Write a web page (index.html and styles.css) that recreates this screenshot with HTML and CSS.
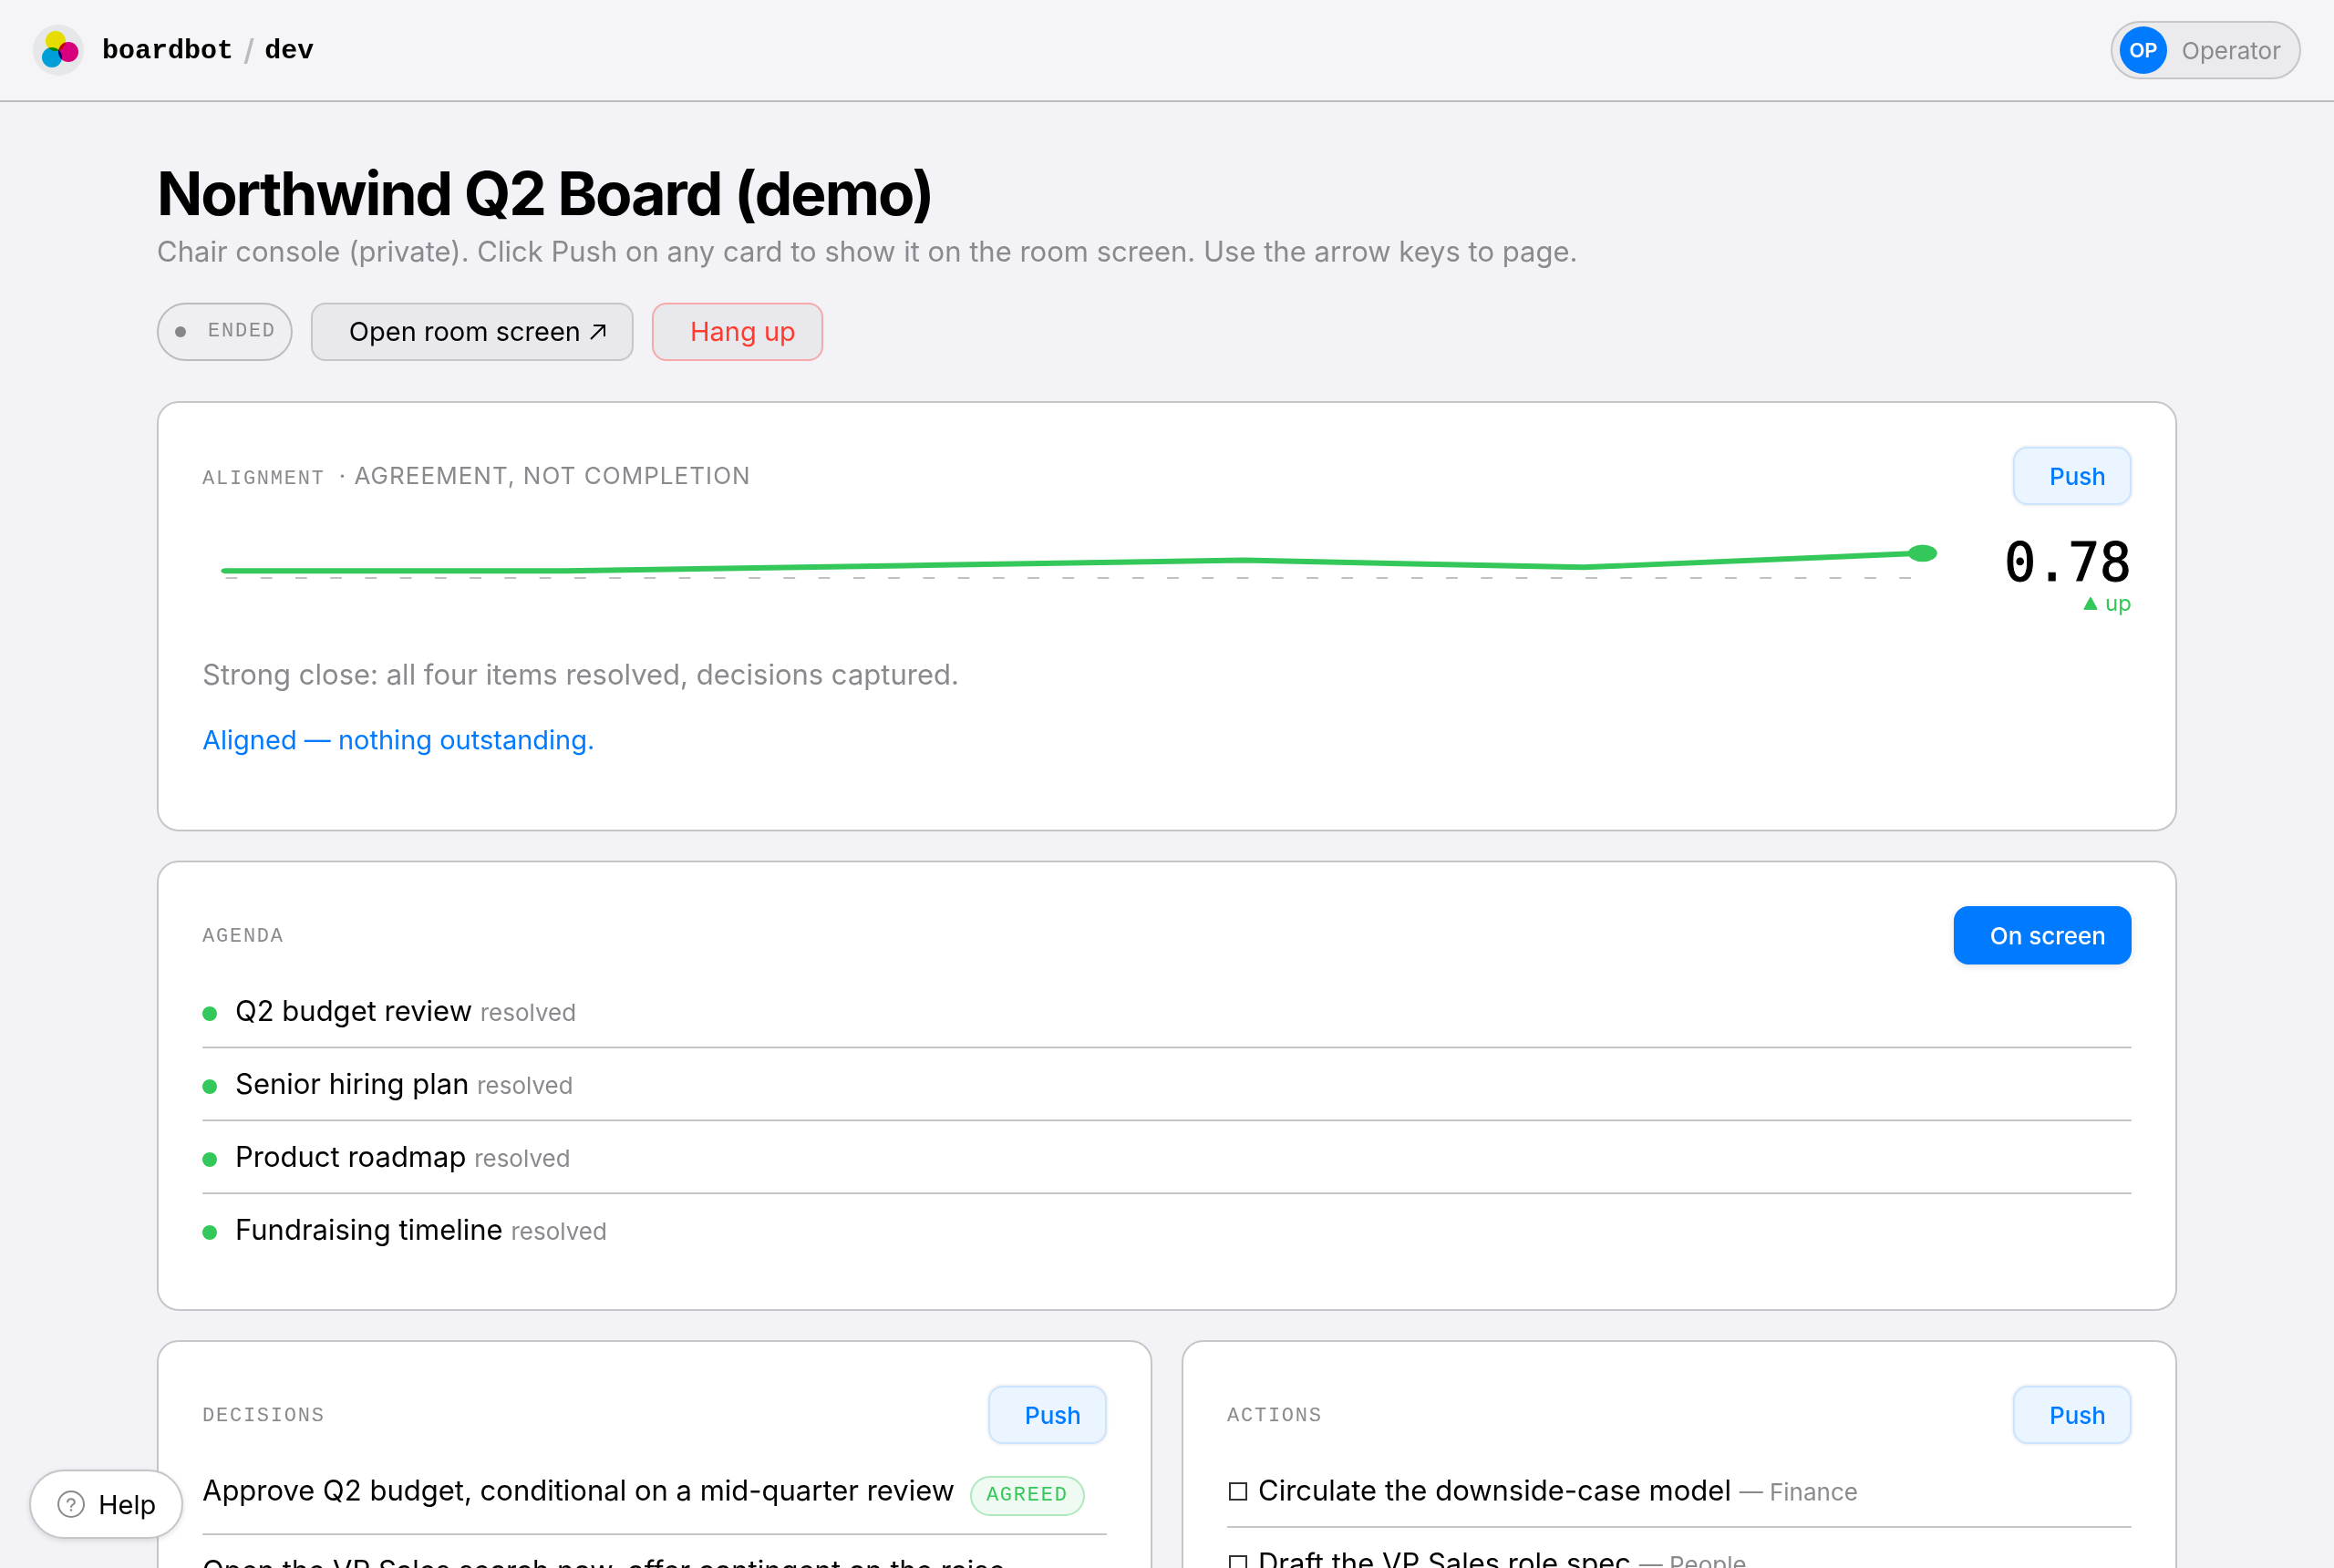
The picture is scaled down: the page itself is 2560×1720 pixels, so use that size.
FILE: index.html
```html
<!DOCTYPE html>
<html lang="en">
<head>
<meta charset="utf-8">
<meta name="viewport" content="width=device-width, initial-scale=1">
<title>Northwind Q2 Board (demo) · boardbot</title>
<link rel="stylesheet" href="styles.css">
</head>
<body>
<div class="page">
  <header class="topbar">
    <div class="brand">
      <svg class="logo" viewBox="0 0 56 56" aria-hidden="true">
        <circle cx="28" cy="28" r="28" fill="#e5e7e8"/>
        <g class="inks">
          <circle cx="25" cy="18" r="11" fill="#e6dc00"/>
          <circle cx="39" cy="30" r="11" fill="#d9007e"/>
          <circle cx="21" cy="36" r="11" fill="#009fda"/>
        </g>
      </svg>
      <span class="brand-name">boardbot</span>
      <span class="slash">/</span>
      <span class="brand-name">dev</span>
    </div>
    <button class="user" type="button"><span class="avatar">OP</span>Operator</button>
  </header>

  <main class="content">
    <h1>Northwind Q2 Board (demo)</h1>
    <p class="lead">Chair console (private). Click Push on any card to show it on the room screen. Use the arrow keys to page.</p>
    <div class="toolbar">
      <span class="status">Ended</span>
      <a class="btn" href="#room">Open room screen
        <svg class="arrow" viewBox="0 0 18 18" aria-hidden="true"><path d="M1 17 16 2M4 2h12v12"/></svg>
      </a>
      <button class="btn danger" type="button">Hang up</button>
    </div>

    <section class="card">
      <div class="card-head">
        <h2>Alignment <span class="note">· agreement, not completion</span></h2>
        <button class="push" type="button">Push</button>
      </div>
      <div class="trend">
        <svg class="chart" viewBox="0 0 300 30" preserveAspectRatio="none" role="img" aria-label="Alignment over time">
          <path d="M4 15H296" stroke="#c0c0c2" stroke-width=".5" stroke-dasharray="2 4"/>
          <path d="M4 12.920 62.400 12.920 120.800 11.360 179.200 9.800 237.600 11.880 296 7.720" stroke="#34c759" stroke-width="1.600" stroke-linecap="round" stroke-linejoin="round"/>
          <circle cx="296" cy="7.720" r="2.500" fill="#34c759"/>
        </svg>
        <div class="score">
          <div class="value">0.78</div>
          <div class="delta"><svg viewBox="0 0 16 16" aria-hidden="true"><path d="M8 2 14.500 14H1.500Z"/></svg>up</div>
        </div>
      </div>
      <p class="summary">Strong close: all four items resolved, decisions captured.</p>
      <p class="outcome">Aligned — nothing outstanding.</p>
    </section>

    <section class="card">
      <div class="card-head">
        <h2>Agenda</h2>
        <button class="push active" type="button">On screen</button>
      </div>
      <ul class="rows">
        <li><i class="dot"></i>Q2 budget review <small>resolved</small></li>
        <li><i class="dot"></i>Senior hiring plan <small>resolved</small></li>
        <li><i class="dot"></i>Product roadmap <small>resolved</small></li>
        <li><i class="dot"></i>Fundraising timeline <small>resolved</small></li>
      </ul>
    </section>

    <div class="pair">
      <section class="card">
        <div class="card-head">
          <h2>Decisions</h2>
          <button class="push" type="button">Push</button>
        </div>
        <ul class="rows">
          <li>Approve Q2 budget, conditional on a mid-quarter review <span class="chip">Agreed</span></li>
          <li>Open the VP Sales search now, offer contingent on the raise</li>
        </ul>
      </section>
      <section class="card">
        <div class="card-head">
          <h2>Actions</h2>
          <button class="push" type="button">Push</button>
        </div>
        <ul class="rows">
          <li><input type="checkbox" id="a1"><label for="a1">Circulate the downside-case model <small>— Finance</small></label></li>
          <li><input type="checkbox" id="a2"><label for="a2">Draft the VP Sales role spec <small>— People</small></label></li>
        </ul>
      </section>
    </div>
  </main>

  <button class="help" type="button">
    <svg viewBox="0 0 32 32" aria-hidden="true"><circle cx="16" cy="16" r="14"/><path d="M12 13.500a4 4 0 0 1 7.900.6c0 2.600-3.900 2.600-3.900 4.800"/><circle class="point" cx="16" cy="22.500" r="1.300"/></svg>
    Help
  </button>
</div>
</body>
</html>
```

FILE: styles.css
```css
:root {
  --bg: #f2f2f7;
  --line: #c6c6c8;
  --muted: #8a8a8e;
  --blue: #007aff;
  --green: #34c759;
  --red: #ff3b30;
  --sans: Inter, "Liberation Sans", sans-serif;
  --mono: "Liberation Mono", "DejaVu Sans Mono", monospace;
}

* { box-sizing: border-box; }

body {
  margin: 0;
  background: var(--bg);
  color: #000;
  font: 31px/48px var(--sans);
}

h1, h2, p, ul { margin: 0; padding: 0; }
ul { list-style: none; }
button { font-family: inherit; cursor: pointer; }

.page {
  height: 100vh;
  overflow-y: auto;
  scrollbar-width: none;
}

/* Top bar */
.topbar {
  display: flex;
  align-items: center;
  justify-content: space-between;
  height: 112px;
  padding: 0 36px;
  background: #f5f5f7;
  border-bottom: 2px solid #bcbcc0;
}

.brand { display: flex; align-items: center; gap: 8px; }
.logo { width: 56px; height: 56px; margin-right: 12px; }
.inks { isolation: isolate; }
.inks circle { mix-blend-mode: multiply; }
.brand-name { padding-top: 2px; font: 700 30px/40px var(--mono); }
.slash { padding: 0 3px; color: #bcbcc0; font-size: 32px; font-weight: 600; line-height: 40px; }

.user {
  display: flex;
  align-items: center;
  gap: 16px;
  height: 64px;
  padding: 0 20px 0 8px;
  border: 2px solid var(--line);
  border-radius: 32px;
  background: #ebebed;
  color: var(--muted);
  font-size: 26px;
}

.avatar {
  width: 52px;
  border-radius: 50%;
  background: var(--blue);
  color: #fff;
  font-size: 22px;
  font-weight: 600;
  line-height: 52px;
  text-align: center;
}

/* Page head */
.content {
  max-width: 2312px;
  margin: 0 auto;
  padding: 64px 48px;
}

h1 {
  font-size: 66px;
  font-weight: 700;
  line-height: 72px;
  letter-spacing: -0.03em;
}

.lead { margin-top: 4px; color: var(--muted); }

.toolbar { display: flex; gap: 20px; margin: 32px 0 44px; }

.status {
  display: flex;
  align-items: center;
  gap: 24px;
  height: 64px;
  padding: 0 16px 0 18px;
  border: 2px solid #bcbcc0;
  border-radius: 32px;
  background: #eeeef3;
  color: var(--muted);
  font: 22px/32px var(--mono);
  letter-spacing: 0.08em;
  text-transform: uppercase;
}
.status::before {
  content: "";
  width: 12px;
  height: 12px;
  border-radius: 50%;
  background: #86868b;
}

.btn {
  display: flex;
  align-items: center;
  gap: 10px;
  height: 64px;
  padding: 0 28px 0 40px;
  border: 2px solid var(--line);
  border-radius: 16px;
  background: #e8e8ed;
  color: #000;
  font-size: 29px;
  line-height: 40px;
  text-decoration: none;
}
.btn.danger { border-color: #f4aaa9; color: var(--red); }
.arrow { width: 18px; height: 18px; fill: none; stroke: currentColor; stroke-width: 2; }

/* Cards */
.card {
  margin-bottom: 32px;
  padding: 48px;
  border: 2px solid var(--line);
  border-radius: 24px;
  background: #fff;
}

.card-head {
  display: flex;
  align-items: center;
  justify-content: space-between;
  margin-bottom: 12px;
}

h2 {
  padding-top: 4px;
  color: var(--muted);
  font: 22px/32px var(--mono);
  letter-spacing: 0.08em;
  text-transform: uppercase;
}
.note { font: 26px/32px var(--sans); letter-spacing: 0.04em; }

.push {
  height: 64px;
  padding: 0 26px 0 38px;
  border: 2px solid #cce4ff;
  border-radius: 16px;
  background: #ebf5ff;
  box-shadow: 0 0 3px 1px rgba(0, 0, 0, 0.08);
  color: var(--blue);
  font-size: 26px;
  font-weight: 500;
}
.push.active {
  border-color: var(--blue);
  background: var(--blue);
  box-shadow: 0 2px 8px rgba(0, 0, 0, 0.12);
  color: #fff;
}

.trend {
  display: flex;
  align-items: center;
  gap: 64px;
  margin-top: 24px;
}
.chart { flex: 1; min-width: 0; height: 112px; fill: none; }
.score { text-align: right; }
.value { font: 58px/56px "DejaVu Sans Mono", monospace; -webkit-text-stroke: 1px currentColor; }
.delta {
  display: flex;
  align-items: center;
  justify-content: flex-end;
  gap: 8px;
  color: var(--green);
  font-size: 24px;
  line-height: 34px;
}
.delta svg { width: 16px; height: 16px; fill: currentColor; stroke: currentColor; stroke-width: 2; stroke-linejoin: round; }

.summary { margin-top: 26px; color: var(--muted); }
.outcome { margin: 24px 0 26px; color: var(--blue); font-size: 29px; }

.rows li { padding: 15px 0; border-bottom: 2px solid var(--line); }
.rows li:last-child { border-bottom: 0; }
.rows small { color: var(--muted); font-size: 26px; line-height: 32px; }
.dot {
  display: inline-block;
  width: 16px;
  height: 16px;
  margin-right: 20px;
  border-radius: 50%;
  background: var(--green);
}

.rows input {
  appearance: none;
  width: 20px;
  height: 20px;
  margin: 0 12px 0 2px;
  border: 2px solid #333;
}

.chip {
  display: inline-block;
  margin: 0 0 4px 8px;
  padding: 2px 16px;
  border: 2px solid #aee9bd;
  border-radius: 22px;
  background: #effaf2;
  color: var(--green);
  font: 22px/36px var(--mono);
  letter-spacing: 0.08em;
  text-transform: uppercase;
}

.pair { display: grid; grid-template-columns: 1fr 1fr; gap: 32px; }

/* Floating help */
.help {
  position: fixed;
  bottom: 32px;
  left: 32px;
  display: flex;
  align-items: center;
  gap: 14px;
  height: 76px;
  padding: 0 28px;
  border: 2px solid var(--line);
  border-radius: 38px;
  background: #fff;
  box-shadow: 0 2px 6px rgba(0, 0, 0, 0.12);
  color: #000;
  font-size: 29px;
}
.help svg { width: 32px; height: 32px; fill: none; stroke: var(--muted); stroke-width: 2; stroke-linecap: round; }
.help .point { fill: var(--muted); stroke: none; }
```
